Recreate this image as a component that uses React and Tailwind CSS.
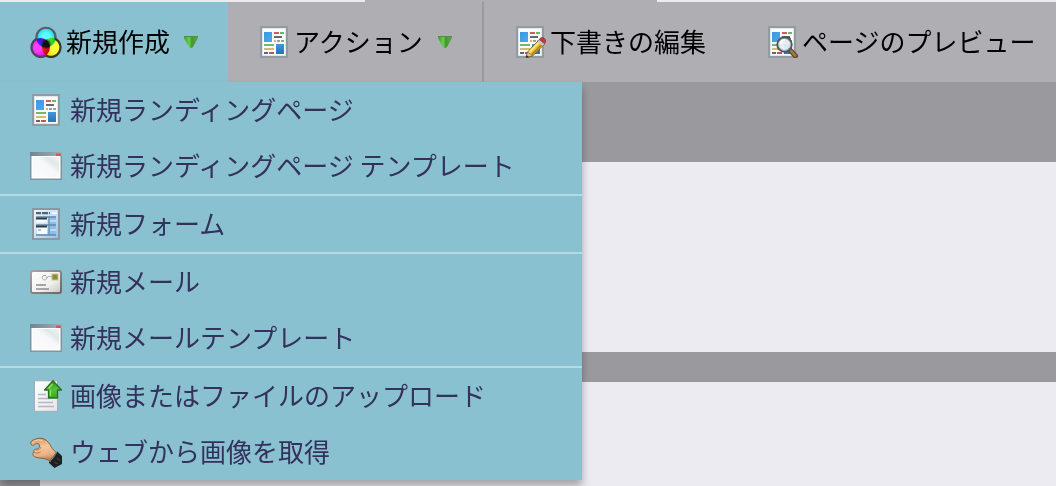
import React from "react";

function Svg({ children }) {
  return (
    <svg viewBox="0 0 32 32" className="size-8 shrink-0" aria-hidden="true">
      {children}
    </svg>
  );
}

function ColorsIcon() {
  return (
    <Svg>
      <defs>
        <radialGradient id="colors-cyan" cx="0.5" cy="0.45" r="0.6">
          <stop offset="0.3" stopColor="#5ffcff" />
          <stop offset="1" stopColor="#14c4dc" />
        </radialGradient>
        <radialGradient id="colors-magenta" cx="0.35" cy="0.5" r="0.6">
          <stop offset="0.3" stopColor="#ff3cff" />
          <stop offset="1" stopColor="#d800dc" />
        </radialGradient>
        <radialGradient id="colors-yellow" cx="0.65" cy="0.5" r="0.6">
          <stop offset="0.3" stopColor="#ffff38" />
          <stop offset="1" stopColor="#e6da00" />
        </radialGradient>
        <radialGradient id="colors-core">
          <stop offset="0.35" stopColor="#101010" />
          <stop offset="1" stopColor="#101010" stopOpacity="0" />
        </radialGradient>
      </defs>
      <g className="isolate">
        <circle cx="16" cy="12" r="9.5" fill="url(#colors-cyan)" className="mix-blend-multiply" />
        <circle cx="10.5" cy="21.5" r="9.5" fill="url(#colors-magenta)" className="mix-blend-multiply" />
        <circle cx="21.5" cy="21.5" r="9.5" fill="url(#colors-yellow)" className="mix-blend-multiply" />
      </g>
      <circle cx="16" cy="18" r="5.5" fill="url(#colors-core)" />
      <g fill="none" strokeWidth="2.2">
        <path d="M6.7 13.2A9.5 9.5 0 1 1 25.3 13.2" stroke="#526167" />
        <path d="M7 12.8A9.5 9.5 0 1 0 16 29.5" stroke="#4c4354" />
        <path d="M25 12.8A9.5 9.5 0 1 1 16 29.5" stroke="#35372a" />
      </g>
    </Svg>
  );
}

function LandingSheet() {
  return (
    <g>
      <defs>
        <linearGradient id="sheet-blue" x1="0" y1="0" x2="1" y2="1">
          <stop offset="0" stopColor="#3d97dd" />
          <stop offset="1" stopColor="#4ca9f0" />
        </linearGradient>
        <linearGradient id="sheet-deep" x1="0" y1="0" x2="0" y2="1">
          <stop offset="0" stopColor="#4398dc" />
          <stop offset="1" stopColor="#2672b4" />
        </linearGradient>
      </defs>
      <rect x="3" y="1" width="26" height="30" fill="#fafbfb" stroke="#919ba3" strokeWidth="2" />
      <rect x="4.5" y="2.5" width="23" height="27" fill="none" stroke="#e1e5e8" />
      <rect x="6" y="6" width="8" height="10" fill="url(#sheet-blue)" />
      <rect x="18" y="18" width="8" height="10" fill="url(#sheet-deep)" />
      <g strokeWidth="2" fill="none">
        <path d="M16 7h5" stroke="#d45a60" />
        <path d="M22 7h4" stroke="#66ba65" />
        <path d="M16 11h8" stroke="#656a70" />
        <path d="M16 15h2" stroke="#dcb64c" />
        <path d="M19 15h3M23 15h3" stroke="#9b9da2" />
        <path d="M6 19h10" stroke="#76ba65" />
        <path d="M6 23h10" stroke="#d3bd68" />
        <path d="M6 27h4" stroke="#61666d" />
        <path d="M11 27h5" stroke="#c84f55" />
      </g>
    </g>
  );
}

function LandingIcon() {
  return (
    <Svg>
      <LandingSheet />
    </Svg>
  );
}

function EditIcon() {
  return (
    <Svg>
      <LandingSheet />
      <path d="M12 31.5 13.6 26 25.5 13.5 30.5 18 18.5 30z" fill="#e8bd2f" stroke="#77602a" />
      <path d="M15.3 26.2 26.5 14.8" stroke="#fbe77a" strokeWidth="2" />
      <path d="M17.8 28.6 29 17.2" stroke="#b8860f" strokeWidth="1.6" />
      <path d="M12 31.5 13.6 26 18.3 29.8z" fill="#e3c798" stroke="#77602a" strokeWidth=".6" />
      <path d="M12 31.8 12.7 29.2 15 31z" fill="#222" />
      <path d="M23.6 15.5 26 13 30.7 17.3 28.3 19.8z" fill="#c5c9cb" />
      <path d="M25.3 13.5c1.2-2.2 3.5-2.5 5.1-1 1.8 1.6 1.8 3.8.1 5.2z" fill="#ca3942" stroke="#7d3338" strokeWidth=".7" />
    </Svg>
  );
}

function PreviewIcon() {
  return (
    <Svg>
      <LandingSheet />
      <path d="m24 24 5.5 6" stroke="#624a2d" strokeWidth="5" strokeLinecap="round" />
      <path d="m25.2 25.2 4 4.4" stroke="#a87941" strokeWidth="2.5" strokeLinecap="round" />
      <circle cx="18.5" cy="18.5" r="7" fill="#e5eef1" fillOpacity=".94" stroke="#53595e" strokeWidth="2.4" />
      <circle cx="18.5" cy="18.5" r="6" fill="none" stroke="#b5bfc5" strokeWidth="1" />
      <path d="M14.6 18c.2-2.5 2.1-4 4.3-4" stroke="#fff" strokeWidth="2" fill="none" />
      <path d="M16 11.5h7l1.5 2" stroke="#4b5056" strokeWidth="1.5" fill="none" />
    </Svg>
  );
}

function WindowIcon() {
  return (
    <Svg>
      <defs>
        <linearGradient id="window-bar" x1="0" y1="0" x2="1" y2="0">
          <stop offset="0" stopColor="#718490" />
          <stop offset="1" stopColor="#9eafbb" />
        </linearGradient>
        <linearGradient id="window-body" x1="0" y1="1" x2="1" y2="0">
          <stop offset="0" stopColor="#fbfcfc" />
          <stop offset=".55" stopColor="#f6f9f9" />
          <stop offset=".75" stopColor="#dfe8e9" />
          <stop offset="1" stopColor="#f1f5f5" />
        </linearGradient>
      </defs>
      <rect x="0" y="2" width="32" height="28" fill="#8195a1" />
      <rect x="0" y="2" width="32" height="4" fill="url(#window-bar)" />
      <rect x="1.5" y="6" width="29" height="22.5" fill="#fff" />
      <rect x="3" y="7" width="26" height="20" fill="url(#window-body)" />
      <rect x="26" y="3.5" width="5" height="2.5" fill="#d45a50" />
    </Svg>
  );
}

function FormIcon() {
  return (
    <Svg>
      <defs>
        <linearGradient id="form-fill" x1="0" y1="0" x2="1" y2="1">
          <stop offset="0" stopColor="#eef6fb" />
          <stop offset=".5" stopColor="#c5e2f5" />
          <stop offset="1" stopColor="#8bc3ec" />
        </linearGradient>
      </defs>
      <rect x="3" y="1" width="26" height="30" fill="url(#form-fill)" stroke="#8c979f" strokeWidth="2" />
      <path d="M6 5.2h5M12 5.2h6M19 5.2h1" stroke="#526679" strokeWidth="2.2" />
      <path d="M22 5h5" stroke="#fff" strokeWidth="1.5" />
      <path d="M20 9h6v18h-7" fill="#8dbfe4" />
      <path d="M6 9h20M6 17h20M6 27h20M19 9v18" stroke="#6488aa" strokeWidth="1.3" fill="none" />
      <rect x="6.5" y="10" width="10.5" height="4.5" fill="#f8fbfd" />
      <path d="M6 10.5h11" stroke="#34393f" strokeWidth="2" />
      <path d="M20 13h6M20 22h6" stroke="#b5dcf4" strokeWidth="2" />
      <rect x="7" y="18" width="10" height="8" fill="#f7fafc" />
      <path d="M6 18.5h11" stroke="#34393f" strokeWidth="2" />
      <path d="M8 22h3" stroke="#8aa2b5" strokeWidth="1.3" />
    </Svg>
  );
}

function MailIcon() {
  return (
    <Svg>
      <defs>
        <linearGradient id="mail-fill" x1="0" y1="0" x2="1" y2="1">
          <stop offset="0" stopColor="#fff" />
          <stop offset=".6" stopColor="#f1f1ef" />
          <stop offset="1" stopColor="#c4c4c0" />
        </linearGradient>
        <linearGradient id="mail-edge" x1="0" y1="0" x2="1" y2="1">
          <stop offset="0" stopColor="#a5a5a2" />
          <stop offset="1" stopColor="#686865" />
        </linearGradient>
      </defs>
      <rect x="1" y="5" width="30" height="22" rx="2" fill="url(#mail-fill)" stroke="url(#mail-edge)" strokeWidth="2" />
      <rect x="22" y="8" width="6" height="6" fill="#8d8a39" stroke="#c7c68d" />
      <path d="M16 9.5c-3-.7-4.3 1.2-3.6 3 .8 2 4 1.8 4.4-.2.3-1.6-1.1-2.3-1.1-2.3M17 12c1.5-3 3-.7 5-1.5" fill="none" stroke="#a4a6a6" />
      <path d="M6 19h10M6 23h13" stroke="#8c8e90" strokeWidth="1.4" />
    </Svg>
  );
}

function UploadIcon() {
  return (
    <Svg>
      <defs>
        <linearGradient id="upload-page" x1="0" y1="0" x2="1" y2="1">
          <stop offset="0" stopColor="#fff" />
          <stop offset="1" stopColor="#e5e5ec" />
        </linearGradient>
        <linearGradient id="upload-arrow" x1="0" y1="0" x2="0" y2="1">
          <stop offset="0" stopColor="#318f20" />
          <stop offset=".5" stopColor="#55c536" />
          <stop offset="1" stopColor="#37a91e" />
        </linearGradient>
      </defs>
      <path d="M4.5.8h23v30.5h-23z" fill="url(#upload-page)" stroke="#a6adb2" />
      <path d="M8 14.5h8M8 18.5h12M8 22.5h15M8 26.5h16" stroke="#b5b8be" strokeWidth="1.4" />
      <path d="M23 .8 31.5 10H27.5v8h-9v-8h-4z" fill="url(#upload-arrow)" stroke="#257122" strokeWidth="1.3" strokeLinejoin="round" />
      <path d="M22.5 4 18.5 8.5M20.5 10v6" stroke="#91df68" strokeWidth="1.3" fill="none" />
    </Svg>
  );
}

function HandIcon() {
  return (
    <Svg>
      <defs>
        <linearGradient id="hand-skin" x1="0.4" y1="0" x2="0.6" y2="1">
          <stop offset="0" stopColor="#d49768" />
          <stop offset=".35" stopColor="#f5c79a" />
          <stop offset=".7" stopColor="#eab182" />
          <stop offset="1" stopColor="#a96d43" />
        </linearGradient>
      </defs>
      <path
        d="M.8 7.3C.4 4.8 3.5 3.8 5.7 3 8 2 11.8 1.8 14 3c3.2 1.2 5.5 4.6 7.2 7.8 1.3 2.4 3.3 4.4 6.6 6.6l-6.6 8.4c-3.4-2.2-6.4-3.2-9.6-3.6-4.4-.5-7.8-1-8.6-3.3C2.5 17.3 3 16.2 4.2 16c-1-1.4-.3-2.6 1.2-2.8 2.8.2 4-1.2 4.3-3.2.1-1.6-1.5-3-3.3-2.6C5 7.8 4 9.5 2.6 9.4 1.5 9.3.9 8.4.8 7.3z"
        fill="url(#hand-skin)"
        stroke="#80573c"
        strokeWidth=".9"
      />
      <path d="M4.2 16.2c2.2 1.5 4.5.8 6.5-.4M5.8 13.6c2 1.3 4.4-.2 5.3-2.6" fill="none" stroke="#b7794d" />
      <path d="M2.5 7c2-3 7-4 10-2" fill="none" stroke="#ffdcb8" />
      <path d="M27.3 15.4 32 20v8l-7.5 4-5.7-5.3c.8-2.5 1.9-3.1 3.6-4.8 1.8-2 2.2-4.8 4.9-6.5z" fill="#1d2020" />
      <path d="M26.8 16.3c-2.2 2.2-2.2 4.1-4.3 6-1.4 1.3-2.2 2.2-2.8 3.8" fill="none" stroke="#737774" strokeWidth="1.4" />
      <path d="m27 22 3 2.5M24.5 26l3 2" stroke="#3c4040" strokeWidth="1.5" />
    </Svg>
  );
}

function ArrowIcon() {
  return (
    <svg viewBox="0 0 14 12" className="h-3 w-3.5 shrink-0" aria-hidden="true">
      <defs>
        <linearGradient id="arrow-fill" x1="0" y1="0" x2="1" y2="0">
          <stop offset="0" stopColor="#3d9a31" />
          <stop offset=".38" stopColor="#68cf47" />
          <stop offset=".55" stopColor="#42982e" />
          <stop offset="1" stopColor="#699d60" />
        </linearGradient>
      </defs>
      <path d="M0 0h14v2l-5 9q-2 2-4 0L0 2z" fill="url(#arrow-fill)" />
      <path d="M0 .5h14" stroke="#538b49" />
    </svg>
  );
}

const tools = [
  { label: "新規作成", Icon: ColorsIcon, menu: true, look: "w-[228px] bg-[#8ac1d0] px-[30px]" },
  { label: "アクション", Icon: LandingIcon, menu: true, look: "w-64 border-r-2 border-[#9a999d] px-[30px]" },
  { label: "下書きの編集", Icon: EditIcon, look: "px-[30px]" },
  { label: "ページのプレビュー", Icon: PreviewIcon, look: "pl-[30px]" },
];

const groups = [
  [
    { label: "新規ランディングページ", Icon: LandingIcon },
    { label: "新規ランディングページ テンプレート", Icon: WindowIcon },
  ],
  [{ label: "新規フォーム", Icon: FormIcon }],
  [
    { label: "新規メール", Icon: MailIcon },
    { label: "新規メールテンプレート", Icon: WindowIcon },
  ],
  [
    { label: "画像またはファイルのアップロード", Icon: UploadIcon },
    { label: "ウェブから画像を取得", Icon: HandIcon },
  ],
];

function CreateMenu() {
  return (
    <div
      role="menu"
      aria-label="新規作成"
      className="absolute top-full left-0 z-10 w-[582px] divide-y-2 divide-[#b5dae4] bg-[#8ac1d0] shadow-[0_6px_8px_rgba(0,0,0,0.3)]"
    >
      {groups.map((items) => (
        <div key={items[0].label} role="group">
          {items.map(({ label, Icon }) => (
            <button
              key={label}
              type="button"
              role="menuitem"
              className="flex h-14 w-full items-center gap-2 px-[30px] text-[#34315c]"
            >
              <Icon />
              <span className="pb-0.5 whitespace-nowrap">{label}</span>
            </button>
          ))}
        </div>
      ))}
    </div>
  );
}

export default function App() {
  return (
    <div className="flex min-h-screen flex-col overflow-x-hidden bg-[#ecebf1] font-['Noto_Sans_CJK_JP',sans-serif] text-[26px] leading-8">
      <div className="flex h-0.5 pl-[365px]">
        <div className="w-[292px] bg-[#afaeb3]" />
      </div>
      <nav className="relative flex h-20 bg-[#afaeb3] text-black">
        {tools.map(({ label, Icon, menu, look }) => (
          <button
            key={label}
            type="button"
            aria-haspopup={menu ? "menu" : undefined}
            className={`flex shrink-0 items-center justify-between ${look}`}
          >
            <span className="flex items-center gap-1">
              <Icon />
              <span className="pb-0.5 whitespace-nowrap">{label}</span>
            </span>
            {menu && <ArrowIcon />}
          </button>
        ))}
        <CreateMenu />
      </nav>
      <main className="flex flex-1 flex-col">
        <div className="h-20 bg-[#9a999d]" />
        <div className="h-[190px]" />
        <div className="h-[30px] bg-[#9a999d]" />
        <div className="flex flex-1">
          <div className="w-10 bg-[#9a999d]" />
          <div className="flex-1" />
        </div>
      </main>
    </div>
  );
}
